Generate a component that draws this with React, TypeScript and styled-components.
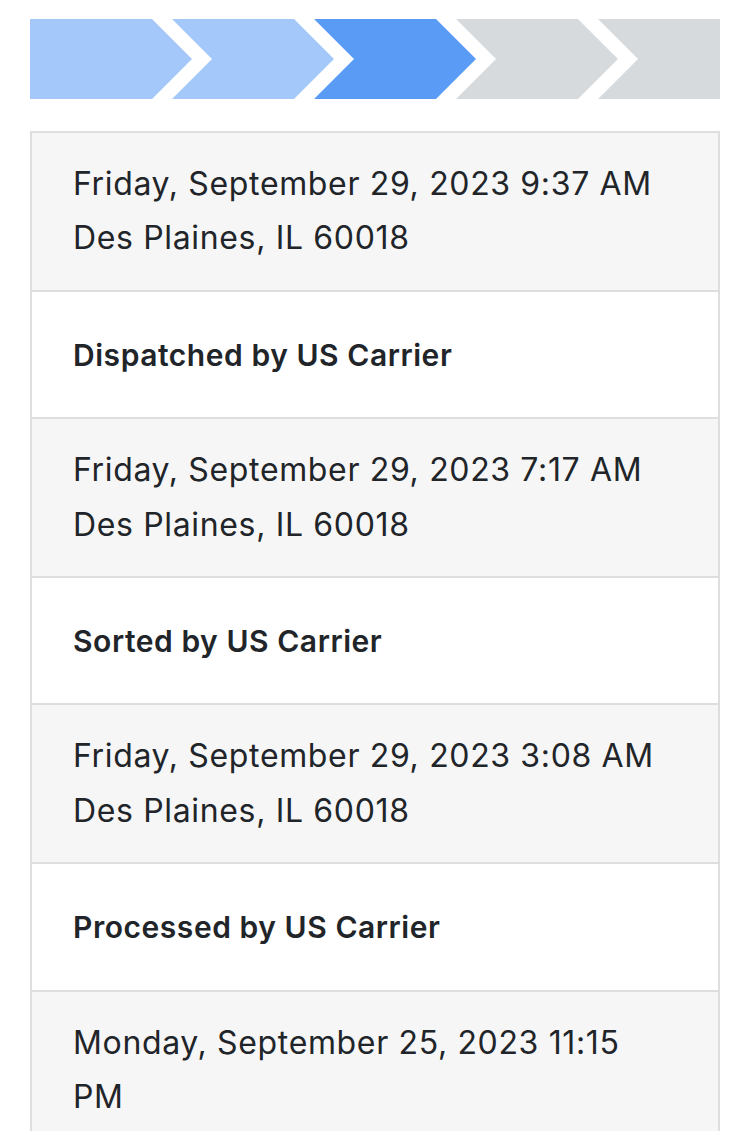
import React from "react";
import styled, { createGlobalStyle } from "styled-components";

const Global = createGlobalStyle`
  html, body { margin: 0; padding: 0; background: #fff; }
  body { font-family: Inter, "Noto Sans", "Liberation Sans", sans-serif; color: #212529; }
`;

const Page = styled.div`
  padding: 19px 30px 0;
  display: flex;
  flex-direction: column;
  gap: 32px;
`;

const Steps = styled.div`
  display: flex;
  height: 80px;
`;

type Pos = "first" | "mid" | "last";
const clips: Record<Pos, string> = {
  first: "polygon(0 0, 122px 0, 162px 50%, 122px 100%, 0 100%)",
  mid: "polygon(0 0, 122px 0, 162px 50%, 122px 100%, 0 100%, 40px 50%)",
  last: "polygon(0 0, 100% 0, 100% 100%, 0 100%, 40px 50%)",
};

const Step = styled.div<{ $pos: Pos; $state: "done" | "current" | "todo" }>`
  flex: 0 0 ${(p) => (p.$pos === "last" ? "122px" : "162px")};
  margin-left: ${(p) => (p.$pos === "first" ? "0" : "-20px")};
  clip-path: ${(p) => clips[p.$pos]};
  background: ${(p) =>
    p.$state === "done" ? "#a4c8fa" : p.$state === "current" ? "#5a9bf6" : "#d7dadd"};
`;

const Table = styled.div`
  display: flex;
  flex-direction: column;
  border: 2px solid #dedede;
  border-bottom: none;
`;

const Row = styled.div<{ $shade?: boolean }>`
  background: ${(p) => (p.$shade ? "#f6f6f6" : "#fff")};
  border-bottom: 2px solid #dedede;
  padding: ${(p) => (p.$shade ? "24px 50px 24px 41px" : "36px 50px 35px 41px")};
  font-size: 32px;
  line-height: 54.4px;
  letter-spacing: 0.65px;
`;

const Event = styled.div`
  font-weight: 600;
  font-size: 30px;
  letter-spacing: 0.55px;
`;

const Line = styled.div``;

const events = [
  { date: "Friday, September 29, 2023 9:37 AM", place: "Des Plaines, IL 60018", label: "Dispatched by US Carrier" },
  { date: "Friday, September 29, 2023 7:17 AM", place: "Des Plaines, IL 60018", label: "Sorted by US Carrier" },
  { date: "Friday, September 29, 2023 3:08 AM", place: "Des Plaines, IL 60018", label: "Processed by US Carrier" },
  { date: "Monday, September 25, 2023 11:15 PM", place: "Des Plaines, IL 60018", label: "Arrived at US Carrier" },
];

export default function App() {
  const states: ("done" | "current" | "todo")[] = ["done", "done", "current", "todo", "todo"];
  return (
    <>
      <Global />
      <Page>
        <Steps>
          {states.map((s, i) => (
            <Step key={i} $state={s} $pos={i === 0 ? "first" : i === states.length - 1 ? "last" : "mid"} />
          ))}
        </Steps>
        <Table>
          {events.map((e, i) => (
            <React.Fragment key={i}>
              <Row $shade>
                <Line>{e.date}</Line>
                <Line>{e.place}</Line>
              </Row>
              <Row>
                <Event>{e.label}</Event>
              </Row>
            </React.Fragment>
          ))}
        </Table>
      </Page>
    </>
  );
}
